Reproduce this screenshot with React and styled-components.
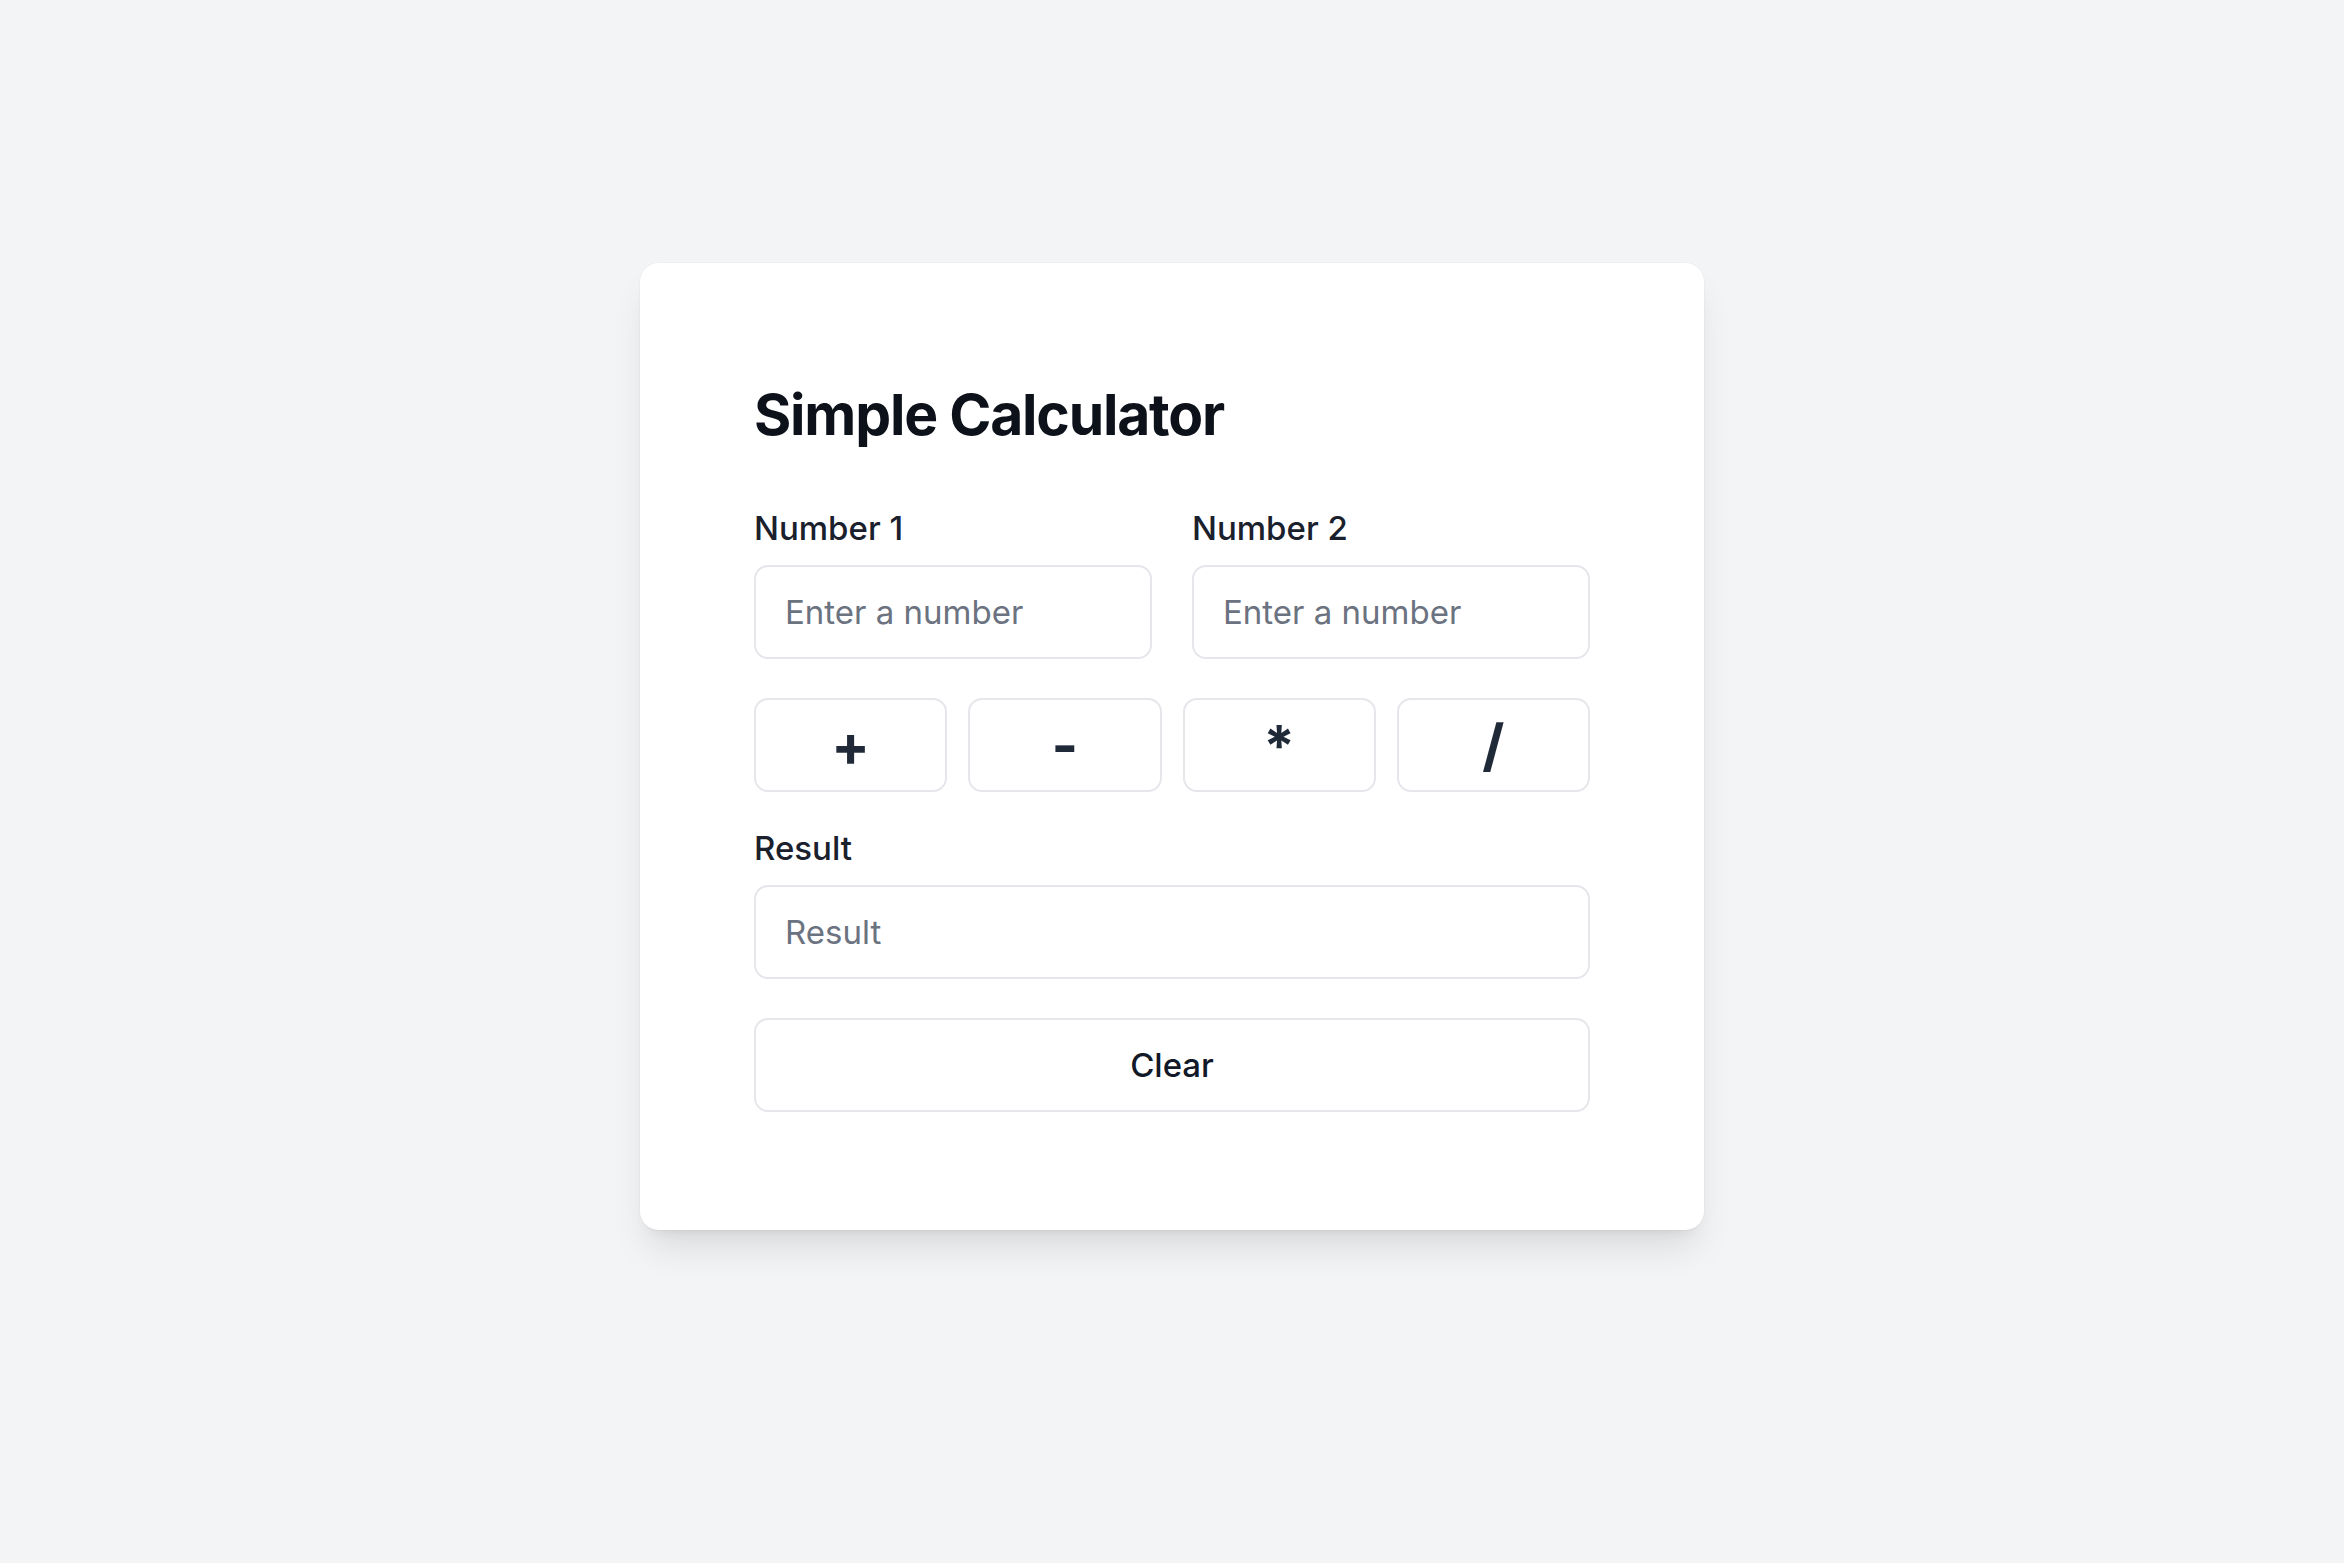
import React, { useState } from "react";
import styled, { createGlobalStyle } from "styled-components";

const GlobalStyle = createGlobalStyle`
  html, body {
    margin: 0;
    padding: 0;
    background: #f3f4f6;
    font-family: Inter, "Noto Sans", "Liberation Sans", sans-serif;
  }
  * { box-sizing: border-box; }
`;

const Page = styled.div`
  min-height: 1563px;
  display: flex;
  justify-content: center;
  align-items: flex-start;
  padding-top: 263px;
  background: #f3f4f6;
`;

const Card = styled.div`
  width: 1064px;
  background: #ffffff;
  border-radius: 19px;
  padding: 114px 114px 118px;
  box-shadow: 0 0 0 1px rgba(0, 0, 0, 0.02),
    0 24px 36px -7px rgba(0, 0, 0, 0.1),
    0 10px 14px -10px rgba(0, 0, 0, 0.1);
  display: flex;
  flex-direction: column;
`;

const Title = styled.h1`
  margin: 0 0 52px;
  font-size: 57px;
  line-height: 76px;
  font-weight: 700;
  color: #0d111a;
  letter-spacing: -1.2px;
`;

const InputGrid = styled.div`
  display: grid;
  grid-template-columns: 1fr 1fr;
  column-gap: 40px;
  margin-bottom: 39px;
`;

const Field = styled.div`
  display: flex;
  flex-direction: column;
`;

const Label = styled.label`
  display: block;
  font-size: 33px;
  line-height: 47px;
  font-weight: 500;
  color: #1a202c;
  margin-bottom: 13px;
`;

const Input = styled.input`
  width: 100%;
  height: 94px;
  padding: 0 29px;
  border: 2px solid #e5e7eb;
  border-radius: 14px;
  background: #ffffff;
  font-family: inherit;
  font-size: 33px;
  color: #111827;
  outline: none;
  &::placeholder {
    color: #6b7280;
    opacity: 1;
  }
`;

const OpRow = styled.div`
  display: grid;
  grid-template-columns: repeat(4, 1fr);
  gap: 21px;
  margin-bottom: 33px;
`;

const OpButton = styled.button`
  height: 94px;
  border: 2px solid #e5e7eb;
  border-radius: 14px;
  background: #ffffff;
  font-family: inherit;
  font-size: 57px;
  font-weight: 700;
  color: #1f2937;
  line-height: 1;
  display: flex;
  align-items: center;
  justify-content: center;
  padding: 0;
  cursor: pointer;
`;

const ClearButton = styled.button`
  width: 100%;
  height: 94px;
  margin-top: 39px;
  border: 2px solid #e5e7eb;
  border-radius: 14px;
  background: #ffffff;
  font-family: inherit;
  font-size: 33px;
  font-weight: 500;
  color: #111827;
  cursor: pointer;
`;

export default function App() {
  const [a, setA] = useState("");
  const [b, setB] = useState("");
  const [result, setResult] = useState("");

  const calc = (op) => {
    const x = parseFloat(a);
    const y = parseFloat(b);
    if (isNaN(x) || isNaN(y)) return;
    let r;
    if (op === "+") r = x + y;
    else if (op === "-") r = x - y;
    else if (op === "*") r = x * y;
    else r = y === 0 ? "Error" : x / y;
    setResult(String(r));
  };

  return (
    <>
      <GlobalStyle />
      <Page>
        <Card>
          <Title>Simple Calculator</Title>
          <InputGrid>
            <Field>
              <Label htmlFor="n1">Number 1</Label>
              <Input
                id="n1"
                type="number"
                placeholder="Enter a number"
                value={a}
                onChange={(e) => setA(e.target.value)}
              />
            </Field>
            <Field>
              <Label htmlFor="n2">Number 2</Label>
              <Input
                id="n2"
                type="number"
                placeholder="Enter a number"
                value={b}
                onChange={(e) => setB(e.target.value)}
              />
            </Field>
          </InputGrid>
          <OpRow>
            {["+", "-", "*", "/"].map((op) => (
              <OpButton key={op} onClick={() => calc(op)}>
                {op}
              </OpButton>
            ))}
          </OpRow>
          <Field>
            <Label htmlFor="res">Result</Label>
            <Input id="res" readOnly placeholder="Result" value={result} />
          </Field>
          <ClearButton
            onClick={() => {
              setA("");
              setB("");
              setResult("");
            }}
          >
            Clear
          </ClearButton>
        </Card>
      </Page>
    </>
  );
}
